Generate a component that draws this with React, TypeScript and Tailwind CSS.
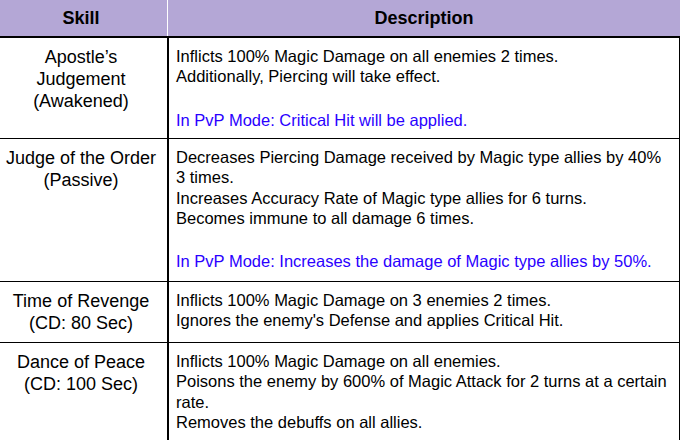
import React from "react";

const rows = [
  {
    skill: ["Apostle’s", "Judgement", "(Awakened)"],
    lines: [
      "Inflicts 100% Magic Damage on all enemies 2 times.",
      "Additionally, Piercing will take effect.",
    ],
    pvp: "In PvP Mode: Critical Hit will be applied.",
    height: "h-[101px]",
  },
  {
    skill: ["Judge of the Order", "(Passive)"],
    lines: [
      "Decreases Piercing Damage received by Magic type allies by 40%",
      "3 times.",
      "Increases Accuracy Rate of Magic type allies for 6 turns.",
      "Becomes immune to all damage 6 times.",
    ],
    pvp: "In PvP Mode: Increases the damage of Magic type allies by 50%.",
    height: "h-[143px]",
  },
  {
    skill: ["Time of Revenge", "(CD: 80 Sec)"],
    lines: [
      "Inflicts 100% Magic Damage on 3 enemies 2 times.",
      "Ignores the enemy's Defense and applies Critical Hit.",
    ],
    height: "h-[61px]",
  },
  {
    skill: ["Dance of Peace", "(CD: 100 Sec)"],
    lines: [
      "Inflicts 100% Magic Damage on all enemies.",
      "Poisons the enemy by 600% of Magic Attack for 2 turns at a certain",
      "rate.",
      "Removes the debuffs on all allies.",
    ],
    height: "h-[110px]",
  },
];

export default function App() {
  return (
    <div className="w-[681px] h-[440px] overflow-hidden bg-white text-black font-['Liberation_Sans',Arial,sans-serif]">
      {/* header */}
      <div className="flex h-[38px] w-[680px] bg-[#b4a7d6] border-b-2 border-black text-[18px] font-bold">
        <div className="w-[167px] flex items-center justify-center pr-[5px]">Skill</div>
        <div className="w-px bg-white" />
        <div className="flex-1 flex items-center justify-center">Description</div>
      </div>

      {rows.map((row, i) => (
        <div key={i} className={`flex w-[680px] border-b border-r border-black ${row.height}`}>
          <div className="w-[169px] shrink-0 border-r-2 border-black pt-[8px] pr-[5px] text-center text-[18px] leading-[22px]">
            {row.skill.map((s, j) => (
              <div key={j}>{s}</div>
            ))}
          </div>
          <div className="flex-1 pl-[7px] pt-[8px] text-[16.5px] leading-[20.3px]">
            {row.lines.map((l, j) => (
              <div key={j}>{l}</div>
            ))}
            {row.pvp && (
              <>
                <div className="h-[23px]" />
                <div className="text-[#2a00ff]">{row.pvp}</div>
              </>
            )}
          </div>
        </div>
      ))}
    </div>
  );
}
